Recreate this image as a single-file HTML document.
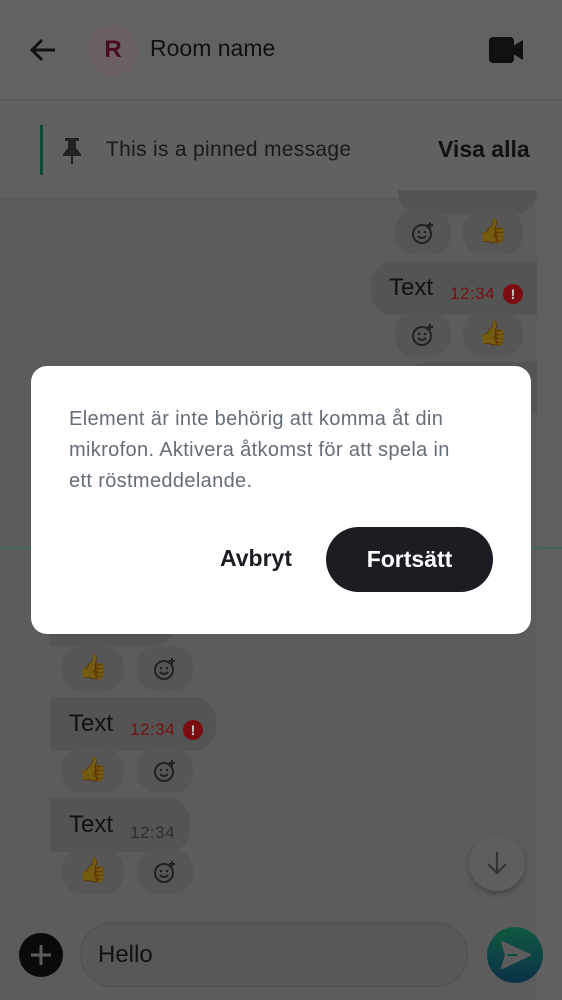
<!DOCTYPE html>
<html><head><meta charset="utf-8"><style>
*{margin:0;padding:0;box-sizing:border-box}
body{width:562px;height:1000px;overflow:hidden;background:#5c5c5c;font-family:"Liberation Sans",sans-serif;position:relative}
.a{position:absolute}
.pill{position:absolute;background:#565656;border-radius:20px;height:44px}
.bub{position:absolute;background:#545454;border-radius:22px}
.t{font-size:24px;color:#111}
.tm{font-size:17px;color:#2e2e2e;letter-spacing:.5px}
.tr{font-size:17px;color:#7a1010;letter-spacing:.5px}
.ex{width:20px;height:20px;border-radius:50%;background:#7a0c12;color:#ccc;font-size:14px;font-weight:bold;text-align:center;line-height:20px;display:inline-block}
.emo{font-size:24px;text-align:center;line-height:44px}
.emo span{filter:brightness(.45)}
</style></head><body>
<div class="a" style="left:537px;top:0;width:25px;height:1000px;background:#606060"></div>
<div class="a" style="left:0;top:0;width:562px;height:100px;background:#626262;border-bottom:1px solid #585858"></div>
<svg class="a" style="left:28px;top:36px" width="30" height="28" viewBox="0 0 30 28"><path d="M27 14H5M14 4L4 14l10 10" stroke="#111" stroke-width="3" fill="none"/></svg>
<div class="a" style="left:88px;top:25px;width:50px;height:50px;border-radius:50%;background:#6a5f61;color:#4a0c22;font-size:24px;font-weight:bold;text-align:center;line-height:50px">R</div>
<div class="a" style="left:150px;top:35px;font-size:23px;color:#111">Room name</div>
<svg class="a" style="left:489px;top:37px" width="36" height="26" viewBox="0 0 36 26"><rect x="0" y="0" width="25" height="26" rx="4" fill="#111"/><path d="M24 9L34 3V23L24 17Z" fill="#111"/></svg>
<div class="a" style="left:0;top:100px;width:537px;height:99px;background:#616161;border-bottom:1px solid #585858"></div>
<div class="a" style="left:40px;top:125px;width:3px;height:50px;background:#0a4a36"></div>
<svg class="a" style="left:60px;top:137px" width="24" height="28" viewBox="0 0 24 28"><path d="M5 1h14v3h-3v7l5 6v2H13v8h-2v-8H3v-2l5-6V4H5z" fill="#222"/></svg>
<div class="a" style="left:106px;top:138px;font-size:21px;color:#1a1a1a;letter-spacing:.3px">This is a pinned message</div>
<div class="a" style="left:438px;top:136px;font-size:23px;font-weight:bold;color:#111">Visa alla</div>
<!-- right messages -->
<div class="bub" style="left:398px;top:190px;width:139px;height:24px;border-radius:0 0 22px 22px"></div>
<div class="pill" style="left:395px;top:210px;width:56px;height:45px"></div>
<svg class="a" style="left:411px;top:221px" width="24" height="24" viewBox="0 0 24 24"><circle cx="11" cy="13" r="9" stroke="#222" stroke-width="2" fill="none"/><circle cx="8" cy="11" r="1.3" fill="#222"/><circle cx="14" cy="11" r="1.3" fill="#222"/><path d="M7 15q4 4 8 0" stroke="#222" stroke-width="2" fill="none"/><path d="M19 1v6M16 4h6" stroke="#222" stroke-width="2"/></svg>
<div class="pill emo" style="left:463px;top:210px;width:60px;height:45px"><span>👍</span></div>
<div class="bub" style="left:371px;top:262px;width:166px;height:53px;border-radius:22px 0 0 22px"></div>
<div class="a t" style="left:389px;top:274px">Text</div>
<div class="a tr" style="left:450px;top:284px">12:34</div>
<div class="a ex" style="left:503px;top:284px">!</div>
<div class="pill" style="left:395px;top:312px;width:56px;height:45px"></div>
<svg class="a" style="left:411px;top:323px" width="24" height="24" viewBox="0 0 24 24"><circle cx="11" cy="13" r="9" stroke="#222" stroke-width="2" fill="none"/><circle cx="8" cy="11" r="1.3" fill="#222"/><circle cx="14" cy="11" r="1.3" fill="#222"/><path d="M7 15q4 4 8 0" stroke="#222" stroke-width="2" fill="none"/><path d="M19 1v6M16 4h6" stroke="#222" stroke-width="2"/></svg>
<div class="pill emo" style="left:463px;top:312px;width:60px;height:45px"><span>👍</span></div>
<div class="bub" style="left:405px;top:362px;width:132px;height:50px;border-radius:22px 0 0 22px"></div>
<div class="a" style="left:0;top:547px;width:562px;height:2px;background:#3f6a5a"></div>
<!-- left messages -->
<div class="bub" style="left:50px;top:600px;width:125px;height:46px;border-radius:0 0 22px 0"></div>
<div class="pill emo" style="left:62px;top:646px;width:62px;height:45px"><span>👍</span></div>
<div class="pill" style="left:137px;top:646px;width:56px;height:45px"></div>
<svg class="a" style="left:153px;top:657px" width="24" height="24" viewBox="0 0 24 24"><circle cx="11" cy="13" r="9" stroke="#222" stroke-width="2" fill="none"/><circle cx="8" cy="11" r="1.3" fill="#222"/><circle cx="14" cy="11" r="1.3" fill="#222"/><path d="M7 15q4 4 8 0" stroke="#222" stroke-width="2" fill="none"/><path d="M19 1v6M16 4h6" stroke="#222" stroke-width="2"/></svg>
<div class="bub" style="left:50px;top:697px;width:166px;height:54px;border-radius:0 22px 22px 0"></div>
<div class="a t" style="left:69px;top:710px">Text</div>
<div class="a tr" style="left:130px;top:720px">12:34</div>
<div class="a ex" style="left:183px;top:720px">!</div>
<div class="pill emo" style="left:62px;top:748px;width:62px;height:45px"><span>👍</span></div>
<div class="pill" style="left:137px;top:748px;width:56px;height:45px"></div>
<svg class="a" style="left:153px;top:759px" width="24" height="24" viewBox="0 0 24 24"><circle cx="11" cy="13" r="9" stroke="#222" stroke-width="2" fill="none"/><circle cx="8" cy="11" r="1.3" fill="#222"/><circle cx="14" cy="11" r="1.3" fill="#222"/><path d="M7 15q4 4 8 0" stroke="#222" stroke-width="2" fill="none"/><path d="M19 1v6M16 4h6" stroke="#222" stroke-width="2"/></svg>
<div class="bub" style="left:50px;top:798px;width:140px;height:54px;border-radius:0 22px 22px 0"></div>
<div class="a t" style="left:69px;top:811px">Text</div>
<div class="a tm" style="left:130px;top:823px">12:34</div>
<div class="pill emo" style="left:62px;top:849px;width:62px;height:45px"><span>👍</span></div>
<div class="pill" style="left:137px;top:849px;width:56px;height:45px"></div>
<svg class="a" style="left:153px;top:860px" width="24" height="24" viewBox="0 0 24 24"><circle cx="11" cy="13" r="9" stroke="#222" stroke-width="2" fill="none"/><circle cx="8" cy="11" r="1.3" fill="#222"/><circle cx="14" cy="11" r="1.3" fill="#222"/><path d="M7 15q4 4 8 0" stroke="#222" stroke-width="2" fill="none"/><path d="M19 1v6M16 4h6" stroke="#222" stroke-width="2"/></svg>
<div class="a" style="left:469px;top:835px;width:56px;height:56px;border-radius:50%;background:#5e5e5e;box-shadow:0 3px 6px rgba(0,0,0,.25)"></div>
<svg class="a" style="left:485px;top:850px" width="24" height="26" viewBox="0 0 24 26"><path d="M12 2v21M3 14l9 9 9-9" stroke="#333" stroke-width="2.2" fill="none"/></svg>
<!-- composer -->
<div class="a" style="left:19px;top:933px;width:44px;height:44px;border-radius:50%;background:#0a0a0a"></div>
<svg class="a" style="left:29px;top:943px" width="24" height="24" viewBox="0 0 24 24"><path d="M12 2v20M2 12h20" stroke="#5c5c5c" stroke-width="3"/></svg>
<div class="a" style="left:80px;top:922px;width:388px;height:65px;border-radius:33px;border:1px solid #4f4f4f;background:#585858"></div>
<div class="a" style="left:98px;top:941px;font-size:24px;color:#111">Hello</div>
<div class="a" style="left:487px;top:927px;width:56px;height:56px;border-radius:50%;background:linear-gradient(180deg,#0f5a40,#0c3048)"></div>
<svg class="a" style="left:500px;top:940px" width="32" height="30" viewBox="0 0 32 30"><path d="M2 2L30 15 2 28 6 15z" fill="#5c5c5c" stroke="#5c5c5c" stroke-width="2" stroke-linejoin="round"/><path d="M7 15H17" stroke="#0d4a43" stroke-width="2"/></svg>
<!-- dialog -->
<div class="a" style="left:31px;top:366px;width:500px;height:268px;border-radius:16px;background:#fff"></div>
<div class="a" style="left:69px;top:404px;width:440px;font-size:20px;line-height:31px;color:#656d77;letter-spacing:.35px;white-space:nowrap">Element är inte behörig att komma åt din<br>mikrofon. Aktivera åtkomst för att spela in<br>ett röstmeddelande.</div>
<div class="a" style="left:220px;top:545px;font-size:23px;font-weight:bold;color:#1b1d22">Avbryt</div>
<div class="a" style="left:326px;top:527px;width:167px;height:65px;border-radius:33px;background:#1b1d22;color:#fff;font-size:23px;font-weight:bold;text-align:center;line-height:65px">Fortsätt</div>
</body></html>
